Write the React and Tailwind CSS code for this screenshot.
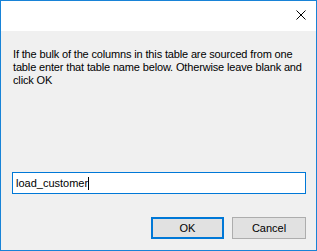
export default function App() {
  return (
    <div className="w-[317px] h-[251px] border border-[#1883d7] bg-[#f0f0f0] flex flex-col font-['Liberation_Sans',Arial,sans-serif] text-[11px] leading-[13px] text-black">
      {/* TITLE BAR */}
      <div className="h-[30px] bg-white flex justify-end items-start">
        <svg width="10" height="10" viewBox="0 0 10 10" className="mt-[9px] mr-[10px]">
          <path d="M0.5 0.5 L9.5 9.5 M9.5 0.5 L0.5 9.5" stroke="#000" strokeWidth="1" />
        </svg>
      </div>

      {/* BODY */}
      <div className="flex-1 flex flex-col pl-[11px] pr-[10px]">
        <p className="mt-[17px] pl-[1px] tracking-[-0.15px]">
          If the bulk of the columns in this table are sourced from one table enter that table name below. Otherwise leave blank and click OK
        </p>

        <div className="mt-[85px] h-[22px] bg-white border border-[#0078d7] flex items-center pl-[3px]">
          <span>load_customer</span>
          <span className="w-px h-[13px] bg-black" />
        </div>

        <div className="mt-[23px] flex justify-end gap-[8px]">
          <button className="w-[73px] h-[22px] border-2 border-[#0078d7] bg-[#e1e1e1]">OK</button>
          <button className="w-[74px] h-[22px] border border-[#adadad] bg-[#e1e1e1]">Cancel</button>
        </div>
      </div>
    </div>
  );
}
